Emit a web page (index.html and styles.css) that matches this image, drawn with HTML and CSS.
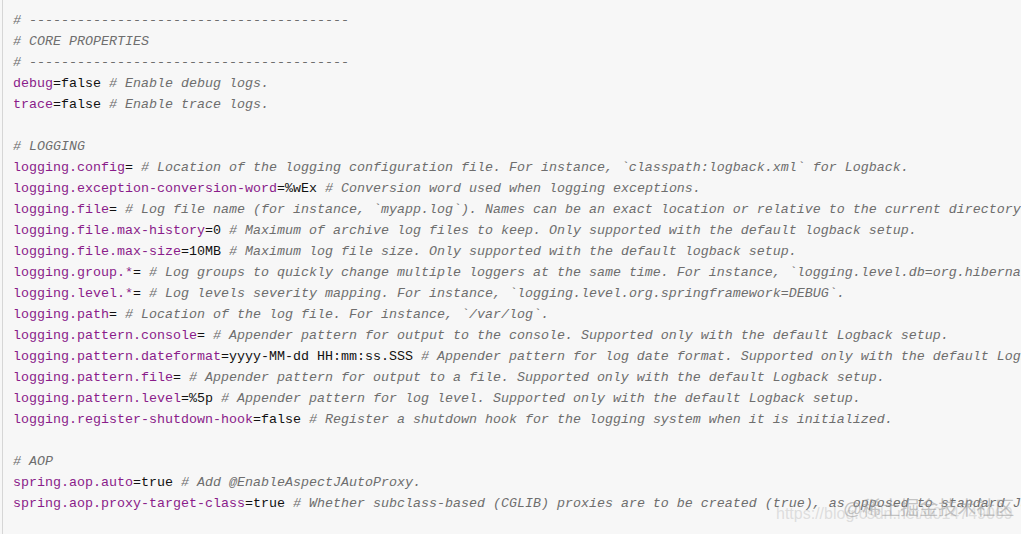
FILE: index.html
```html
<!DOCTYPE html>
<html>
<head>
<meta charset="utf-8">
<link rel="stylesheet" href="styles.css">
</head>
<body>
<div class="code">
<pre><span class="c"># ----------------------------------------</span>
<span class="c"># CORE PROPERTIES</span>
<span class="c"># ----------------------------------------</span>
<span class="k">debug</span>=false <span class="c"># Enable debug logs.</span>
<span class="k">trace</span>=false <span class="c"># Enable trace logs.</span>

<span class="c"># LOGGING</span>
<span class="k">logging.config</span>= <span class="c"># Location of the logging configuration file. For instance, `classpath:logback.xml` for Logback.</span>
<span class="k">logging.exception-conversion-word</span>=%wEx <span class="c"># Conversion word used when logging exceptions.</span>
<span class="k">logging.file</span>= <span class="c"># Log file name (for instance, `myapp.log`). Names can be an exact location or relative to the current directory.</span>
<span class="k">logging.file.max-history</span>=0 <span class="c"># Maximum of archive log files to keep. Only supported with the default logback setup.</span>
<span class="k">logging.file.max-size</span>=10MB <span class="c"># Maximum log file size. Only supported with the default logback setup.</span>
<span class="k">logging.group.*</span>= <span class="c"># Log groups to quickly change multiple loggers at the same time. For instance, `logging.level.db=org.hibernate,org.springframework.jdbc`.</span>
<span class="k">logging.level.*</span>= <span class="c"># Log levels severity mapping. For instance, `logging.level.org.springframework=DEBUG`.</span>
<span class="k">logging.path</span>= <span class="c"># Location of the log file. For instance, `/var/log`.</span>
<span class="k">logging.pattern.console</span>= <span class="c"># Appender pattern for output to the console. Supported only with the default Logback setup.</span>
<span class="k">logging.pattern.dateformat</span>=yyyy-MM-dd HH:mm:ss.SSS <span class="c"># Appender pattern for log date format. Supported only with the default Logback setup.</span>
<span class="k">logging.pattern.file</span>= <span class="c"># Appender pattern for output to a file. Supported only with the default Logback setup.</span>
<span class="k">logging.pattern.level</span>=%5p <span class="c"># Appender pattern for log level. Supported only with the default Logback setup.</span>
<span class="k">logging.register-shutdown-hook</span>=false <span class="c"># Register a shutdown hook for the logging system when it is initialized.</span>

<span class="c"># AOP</span>
<span class="k">spring.aop.auto</span>=true <span class="c"># Add @EnableAspectJAutoProxy.</span>
<span class="k">spring.aop.proxy-target-class</span>=true <span class="c"># Whether subclass-based (CGLIB) proxies are to be created (true), as opposed to standard Java interface-based proxies (false).</span></pre>
</div>
<div class="wm">
  <div class="wm-url">https://blog.csdn.net/u014749069</div>
  <div class="wm-name">@稀土掘金技术社区</div>
</div>
</body>
</html>
```
FILE: styles.css
```css
html, body {
  margin: 0;
  padding: 0;
  background: #f7f7f7;
  overflow: hidden;
  width: 1021px;
  height: 534px;
}
.code {
  margin-left: 2px;
  border-left: 1px solid #d6d6d6;
  background: #f7f7f7;
  height: 534px;
  overflow: hidden;
  box-sizing: border-box;
  padding: 10px 0 0 10px;
}
pre {
  margin: 0;
  font-family: "Liberation Mono", "DejaVu Sans Mono", monospace;
  font-size: 13.33px;
  line-height: 21px;
  color: #111;
  white-space: pre;
}
.k { color: #8a1c8a; }
.c { color: #6e6e6e; font-style: italic; }
.wm {
  position: absolute;
  left: 770px;
  top: 488px;
  width: 260px;
  height: 46px;
  pointer-events: none;
}
.wm-url {
  position: absolute;
  left: 6px;
  top: 17px;
  font-family: "Liberation Sans", sans-serif;
  font-size: 16px;
  color: rgba(200, 200, 200, 0.55);
  white-space: nowrap;
}
.wm-name {
  position: absolute;
  left: 73px;
  top: 5px;
  font-family: "Liberation Sans", "Noto Sans CJK SC", sans-serif;
  font-size: 19px;
  color: rgba(150, 150, 150, 0.55);
  white-space: nowrap;
}
```
